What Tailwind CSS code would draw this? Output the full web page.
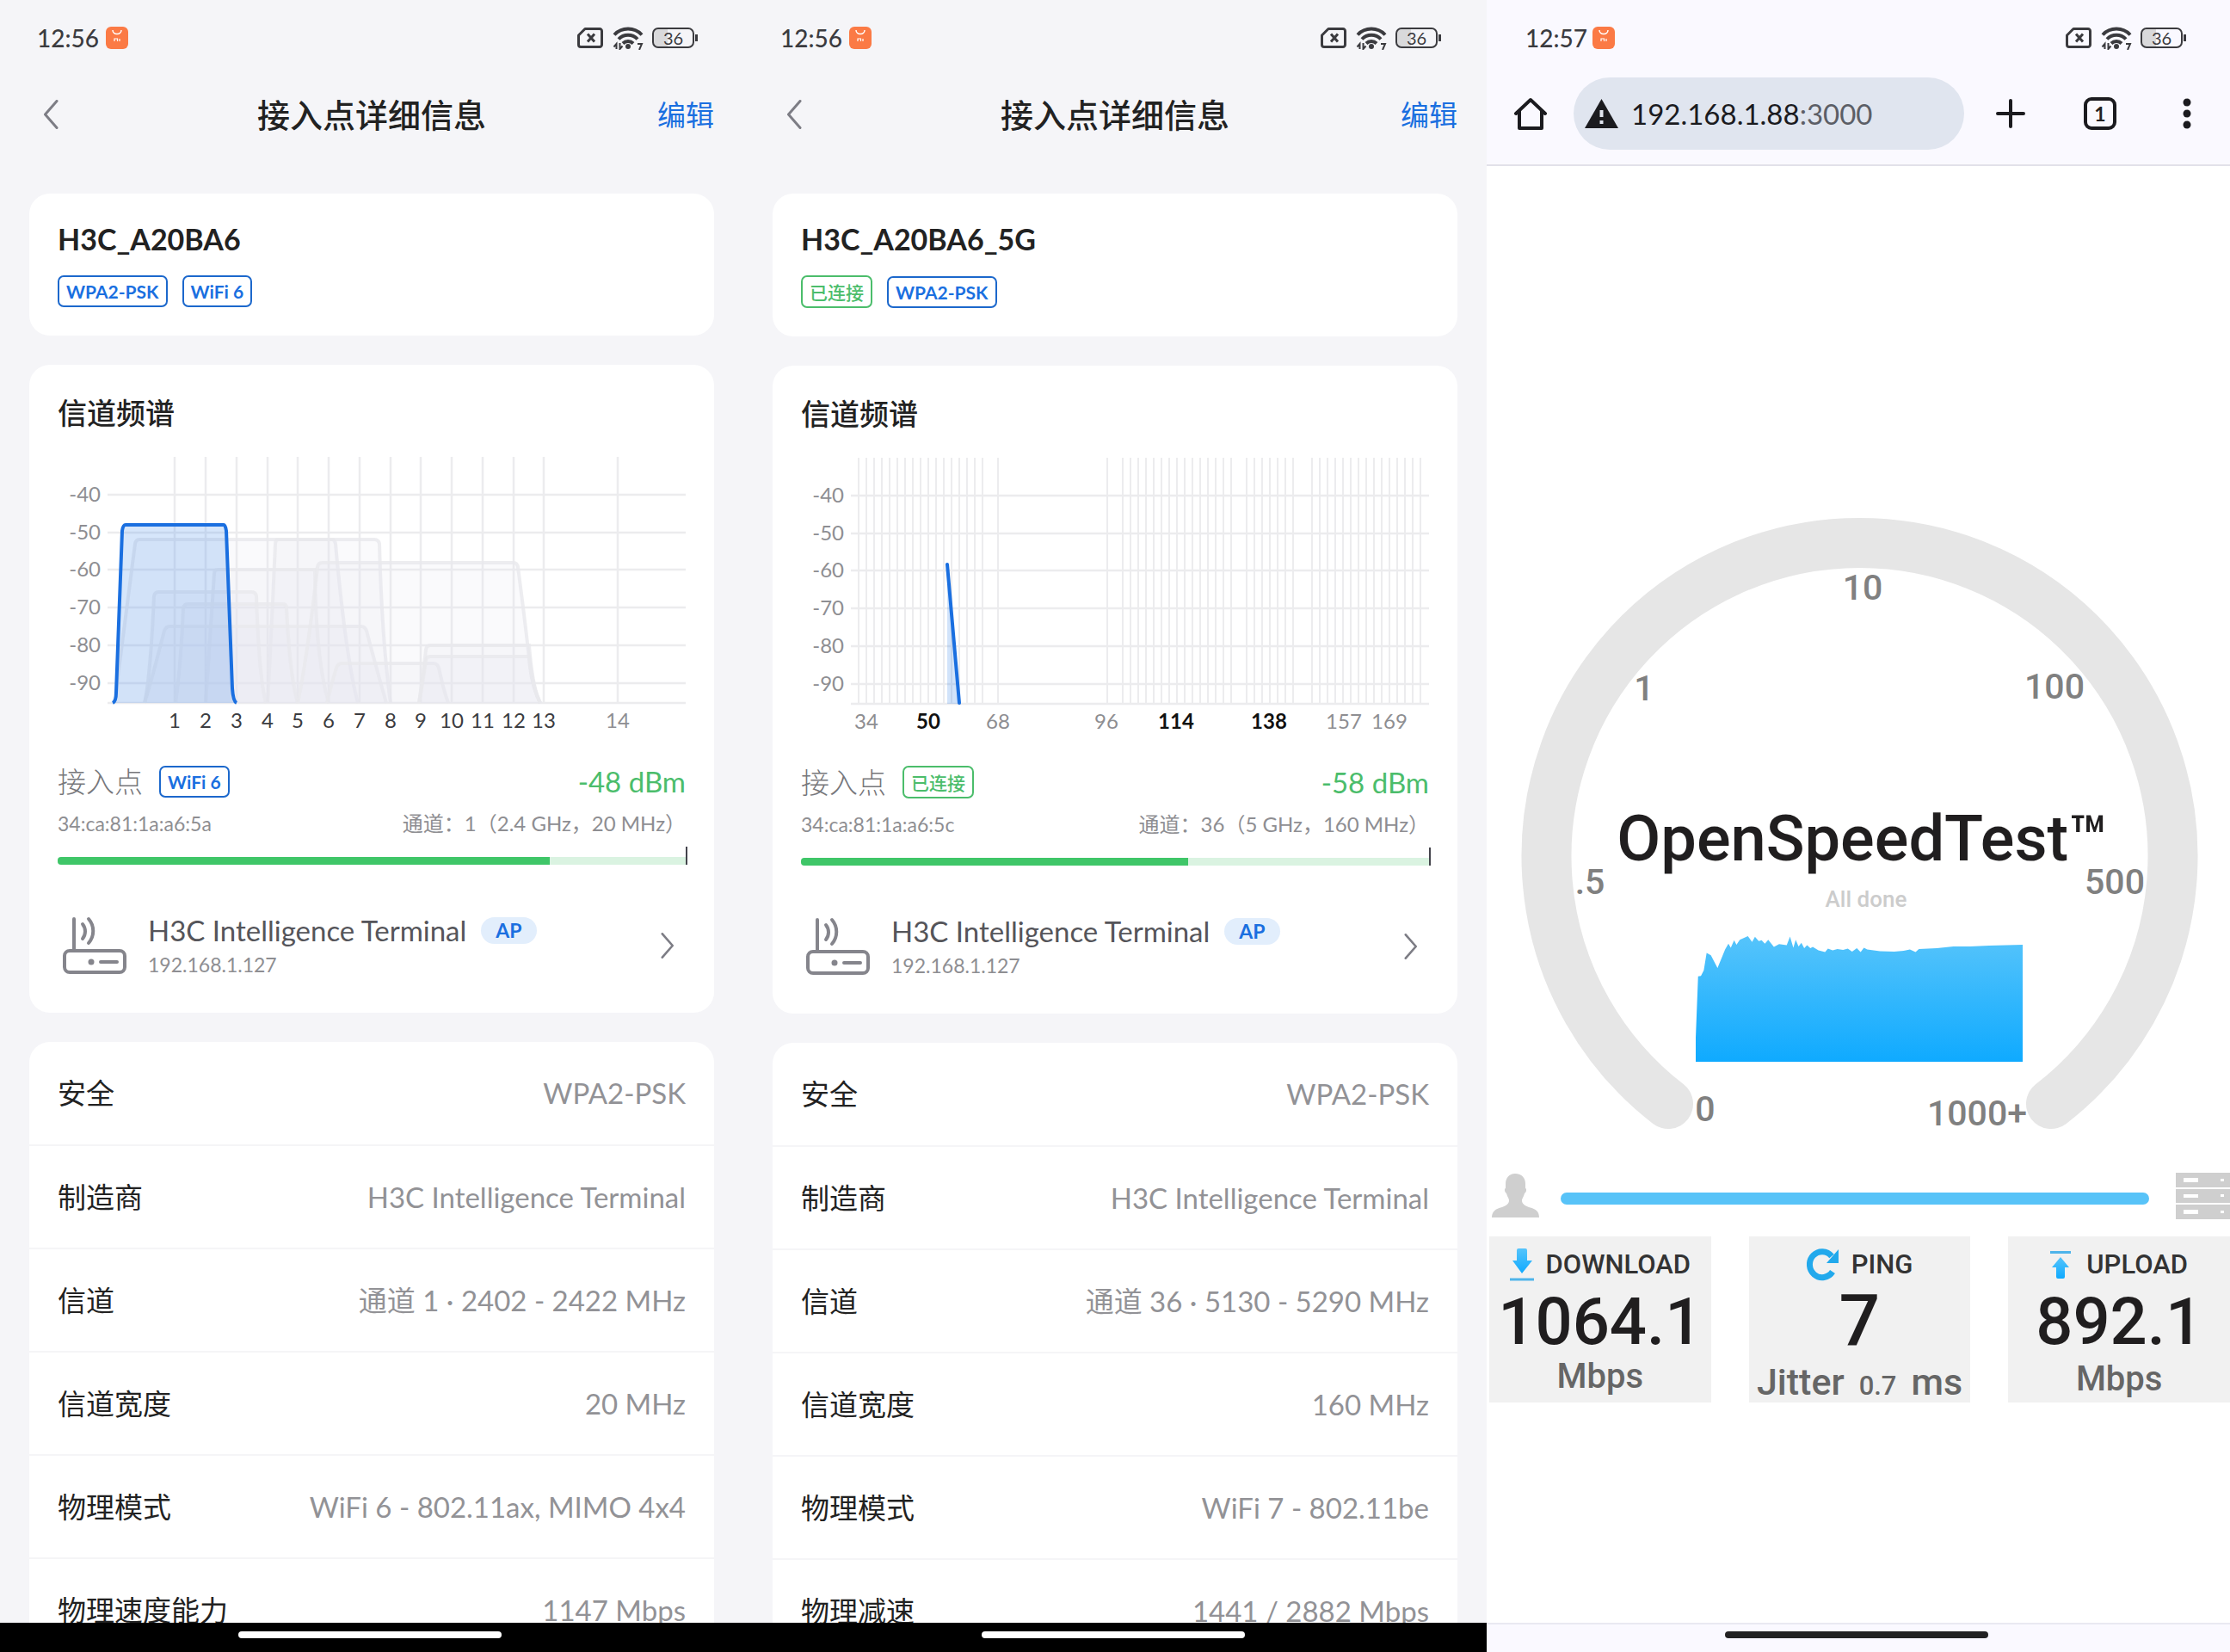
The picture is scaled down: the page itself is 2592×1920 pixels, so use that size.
<!DOCTYPE html>
<html lang="zh-CN">
<head>
  <meta charset="UTF-8">
  <meta name="viewport" content="width=device-width, initial-scale=1.0">
  <title>接入点详细信息</title>
  <script src="https://cdn.jsdelivr.net/npm/@tailwindcss/browser@4"></script>
</head>
<body class="grid h-screen grid-cols-3 overflow-hidden bg-white font-['Lato','Noto_Sans_CJK_SC',sans-serif] text-[#222]">

  <!-- Shared icons -->
  <svg class="hidden">
    <symbol id="store" viewBox="0 0 26 26">
      <rect width="26" height="26" rx="6" fill="#fb7a45"/>
      <path d="M8 4c0 6 10 6 10 0" fill="none" stroke="#fff" stroke-width="1.5"/>
      <path d="M10 17v-3h3.500v3M16 14v3" fill="none" stroke="#fff" stroke-width="1.2"/>
    </symbol>
    <symbol id="sim" viewBox="0 0 30 24">
      <path d="M9 1.500h17a2.500 2.500 0 0 1 2.500 2.500v16a2.500 2.500 0 0 1-2.500 2.500H4a2.500 2.500 0 0 1-2.500-2.500V9z" fill="none" stroke="#3b3b3f" stroke-width="3" stroke-linejoin="round"/>
      <path d="M12 7.500l8 9M20 7.500l-8 9" stroke="#3b3b3f" stroke-width="3"/>
    </symbol>
    <symbol id="wifi" viewBox="0 0 36 27">
      <g fill="none" stroke="#3b3b3f" stroke-width="4">
        <path d="M2 9.500a22 22 0 0 1 32 0"/>
        <path d="M7 14.500a15 15 0 0 1 22 0"/>
        <path d="M12 19.500a8.500 8.500 0 0 1 12 0"/>
      </g>
      <circle cx="18" cy="23" r="3" fill="#3b3b3f"/>
      <path d="M4.500 26v-6l-3 3.500M8.500 19v7l3-3.500M29 20h5l-3 7" fill="none" stroke="#3b3b3f" stroke-width="2"/>
    </symbol>
    <symbol id="router" viewBox="0 0 76 68">
      <g fill="none" stroke="#85858c" stroke-width="4" stroke-linecap="round">
        <rect x="3" y="40" width="70" height="25" rx="6"/>
        <path d="M14 3v36M24 9c4 5 4 12 0 17M31 3c7 8 7 20 0 28M45 53h19" />
      </g>
      <circle cx="34" cy="53" r="3.500" fill="#85858c"/>
    </symbol>
    <symbol id="chevron" viewBox="0 0 18 34">
      <path d="M16 1.500L2.500 17 16 32.500" fill="none" stroke="#7d7d85" stroke-width="3" stroke-linecap="round" stroke-linejoin="round"/>
    </symbol>
  </svg>

  <!-- 2.4G access point -->
  <section class="flex min-h-0 min-w-0 flex-col bg-[#f5f5f8]">
    <div class="flex h-[88px] shrink-0 items-center pr-[53px] pl-[43px] text-[#3b3b3f]">
      <span class="text-[28px] leading-none font-medium">12:56</span>
      <svg class="ml-2 h-[26px] w-[26px]"><use href="#store"/></svg>
      <svg class="ml-auto h-6 w-[30px]"><use href="#sim"/></svg>
      <svg class="ml-[11px] h-[27px] w-9"><use href="#wifi"/></svg>
      <span class="ml-[10px] flex h-6 w-[49px] items-center justify-center rounded-[7px] border-2 border-[#3b3b3f] bg-[linear-gradient(to_right,#d9d9db_35%,transparent_35%)] text-xl leading-none">36</span>
      <span class="ml-px h-2 w-[3px] bg-[#3b3b3f]"></span>
    </div>

    <header class="flex h-[90px] shrink-0 items-center justify-between px-[34px]">
      <button class="w-[66px] pl-4" aria-label="返回"><svg class="h-[34px] w-[18px]"><use href="#chevron"/></svg></button>
      <h1 class="text-[38px] leading-none font-medium">接入点详细信息</h1>
      <button class="text-[33px] leading-none text-[#1a6fe0]">编辑</button>
    </header>

    <main class="flex min-h-0 flex-1 flex-col gap-[34px] overflow-hidden px-[34px] pt-[47px]">
      <div class="shrink-0 rounded-3xl bg-white px-[33px] pt-8 pb-[33px]">
        <h2 class="text-[34px] leading-[42px] font-bold">H3C_A20BA6</h2>
        <div class="mt-[21px] flex items-end gap-[17px] text-[21px] leading-none font-bold">
          <span class="flex h-[37px] items-center rounded-[7px] border-2 border-[#1c68cc] px-2 text-[#1a6fe0]">WPA2-PSK</span>
          <span class="flex h-[37px] items-center rounded-[7px] border-2 border-[#1c68cc] px-2 text-[#1a6fe0]">WiFi 6</span>
        </div>
      </div>

      <div class="shrink-0 rounded-3xl bg-white px-[33px] pt-9 pb-11">
        <h2 class="text-[34px] leading-10 font-medium">信道频谱</h2>
        <svg class="mt-[25px] block w-full" viewBox="0 0 730 330">
          <g stroke="#ececee" stroke-width="2.500">
            <path d="M58 50H730M58 94H730M58 137H730M58 181H730M58 225H730M58 269H730M58 292H730"/>
            <path d="M136 6V292M172 6V292M208 6V292M244 6V292M279 6V292M315 6V292M351 6V292M387 6V292M422 6V292M458 6V292M494 6V292M530 6V292M565 6V292M651 6V292"/>
          </g>
          <g fill="#e8e7f2" fill-opacity=".2" stroke="#e9e9ec" stroke-opacity=".8" stroke-width="4">
            <path d="M66 292L90 107Q91 102 95 102H319Q322 102 323 107Q335 240 349 292"/>
            <path d="M244 292Q249 200 253 107Q253 102 257 102H368Q373 102 374 107Q377 220 387 292"/>
            <path d="M172 292Q178 200 182 142Q182 137 186 137H299Q300 240 315 292"/>
            <path d="M101 292Q108 260 112 168Q113 163 117 163H226Q230 163 231 168Q234 260 242 292"/>
            <path d="M137 292Q143 250 146 182Q147 177 151 177H262Q266 177 266 182Q270 260 279 292"/>
            <path d="M101 292Q108 270 124 208Q126 203 130 203H353Q357 203 359 208Q370 250 382 292"/>
            <path d="M279 292Q290 240 302 134Q303 129 307 129H530Q534 129 535 134Q545 210 549 250Q552 275 561 292"/>
            <path d="M313 292Q318 270 324 251Q326 246 330 246H437Q441 246 443 251Q448 275 454 292"/>
            <path d="M420 292Q425 260 428 230Q429 225 433 225H548Q552 275 561 292"/>
            <path d="M420 292Q425 265 428 242Q429 238 433 238H548Q552 275 561 292"/>
          </g>
          <path d="M64 292Q68 290 68 280L75 92Q76 85 79 85H193Q195 85 196 92L203 275Q204 290 208 292" fill="#1a73e8" fill-opacity=".18"/>
          <path d="M64 292Q68 290 68 280L75 92Q76 85 79 85H193Q195 85 196 92L203 275Q204 290 208 292" fill="none" stroke="#1a6fe0" stroke-width="4"/>
          <g class="text-[24px]" fill="#8e8e92" text-anchor="end">
            <text x="50" y="58">-40</text><text x="50" y="102">-50</text><text x="50" y="145">-60</text>
            <text x="50" y="189">-70</text><text x="50" y="233">-80</text><text x="50" y="277">-90</text>
          </g>
          <g class="text-[24px]" fill="#3c3c40" text-anchor="middle">
            <text x="136" y="321">1</text><text x="172" y="321">2</text><text x="208" y="321">3</text>
            <text x="244" y="321">4</text><text x="279" y="321">5</text><text x="315" y="321">6</text>
            <text x="351" y="321">7</text><text x="387" y="321">8</text><text x="422" y="321">9</text>
            <text x="458" y="321">10</text><text x="494" y="321">11</text><text x="530" y="321">12</text>
            <text x="565" y="321">13</text><text x="651" y="321" fill="#8e8e92">14</text>
          </g>
        </svg>

        <div class="mt-8 flex h-[42px] items-center">
          <span class="text-[33px] leading-none font-light text-[#77777b]">接入点</span>
          <span class="ml-[19px] flex h-[37px] items-center rounded-[7px] border-2 border-[#1c68cc] px-2 text-[21px] leading-none font-bold text-[#1a6fe0]">WiFi 6</span>
          <span class="ml-auto text-[33px] leading-none text-[#4bbd6b]">-48 dBm</span>
        </div>
        <div class="mt-3 flex justify-between text-[24px] leading-8 text-[#8e8e92]">
          <span class="text-[23px]">34:ca:81:1a:a6:5a</span>
          <span>通道：1（2.4 GHz，20 MHz）</span>
        </div>
        <div class="mt-[11px] flex h-[21px] items-end">
          <div class="h-[9px] flex-1 overflow-hidden rounded-l bg-[#daf3e1]">
            <div class="h-full bg-[#3fc668]" style="width: 78.3%"></div>
          </div>
          <div class="-mr-[2px] h-full w-[2px] bg-[#44444c]"></div>
        </div>
        <a href="#" class="mt-[60px] flex h-[68px] items-center pl-[5px]">
          <svg class="h-[68px] w-[76px]"><use href="#router"/></svg>
          <div class="ml-6 pt-1">
            <div class="flex items-center">
              <span class="text-[33px] leading-10 text-[#55555a]">H3C Intelligence Terminal</span>
              <span class="ml-[17px] flex h-[31px] items-center rounded-full bg-[#e2eefc] px-[17px] text-[23px] leading-none font-bold text-[#1a6fe0]">AP</span>
            </div>
            <div class="text-[23px] leading-10 text-[#8e8e92]">192.168.1.127</div>
          </div>
          <svg class="mr-[13px] ml-auto h-[30px] w-4 rotate-180"><use href="#chevron"/></svg>
        </a>
      </div>

      <div class="shrink-0 rounded-3xl bg-white">
        <table class="w-full text-[33px] leading-none">
          <tbody class="divide-y-2 divide-[#f5f5f7]">
            <tr class="h-[120px]"><th class="pl-[33px] text-left font-normal">安全</th><td class="pr-[33px] text-right text-[#929296]">WPA2-PSK</td></tr>
            <tr class="h-[120px]"><th class="pl-[33px] text-left font-normal">制造商</th><td class="pr-[33px] text-right text-[#929296]">H3C Intelligence Terminal</td></tr>
            <tr class="h-[120px]"><th class="pl-[33px] text-left font-normal">信道</th><td class="pr-[33px] text-right text-[#929296]">通道 1 · 2402 - 2422 MHz</td></tr>
            <tr class="h-[120px]"><th class="pl-[33px] text-left font-normal">信道宽度</th><td class="pr-[33px] text-right text-[#929296]">20 MHz</td></tr>
            <tr class="h-[120px]"><th class="pl-[33px] text-left font-normal">物理模式</th><td class="pr-[33px] text-right text-[#929296]">WiFi 6 - 802.11ax, MIMO 4x4</td></tr>
            <tr class="h-[120px]"><th class="pl-[33px] text-left font-normal">物理速度能力</th><td class="pr-[33px] text-right text-[#929296]">1147 Mbps</td></tr>
          </tbody>
        </table>
      </div>
    </main>

    <footer class="flex h-[34px] shrink-0 justify-center bg-black pt-[10px] pr-1">
      <div class="h-2 w-[306px] rounded-full bg-white"></div>
    </footer>
  </section>

  <!-- 5G access point -->
  <section class="flex min-h-0 min-w-0 flex-col bg-[#f5f5f8]">
    <div class="flex h-[88px] shrink-0 items-center pr-[53px] pl-[43px] text-[#3b3b3f]">
      <span class="text-[28px] leading-none font-medium">12:56</span>
      <svg class="ml-2 h-[26px] w-[26px]"><use href="#store"/></svg>
      <svg class="ml-auto h-6 w-[30px]"><use href="#sim"/></svg>
      <svg class="ml-[11px] h-[27px] w-9"><use href="#wifi"/></svg>
      <span class="ml-[10px] flex h-6 w-[49px] items-center justify-center rounded-[7px] border-2 border-[#3b3b3f] bg-[linear-gradient(to_right,#d9d9db_35%,transparent_35%)] text-xl leading-none">36</span>
      <span class="ml-px h-2 w-[3px] bg-[#3b3b3f]"></span>
    </div>

    <header class="flex h-[90px] shrink-0 items-center justify-between px-[34px]">
      <button class="w-[66px] pl-4" aria-label="返回"><svg class="h-[34px] w-[18px]"><use href="#chevron"/></svg></button>
      <h1 class="text-[38px] leading-none font-medium">接入点详细信息</h1>
      <button class="text-[33px] leading-none text-[#1a6fe0]">编辑</button>
    </header>

    <main class="flex min-h-0 flex-1 flex-col gap-[34px] overflow-hidden px-[34px] pt-[47px]">
      <div class="shrink-0 rounded-3xl bg-white px-[33px] pt-8 pb-[33px]">
        <h2 class="text-[34px] leading-[42px] font-bold">H3C_A20BA6_5G</h2>
        <div class="mt-[21px] flex items-end gap-[17px] text-[21px] leading-none font-bold">
          <span class="flex h-[38px] items-center rounded-[7px] border-2 border-[#4bbd6b] px-2 font-medium text-[#4bbd6b]">已连接</span>
          <span class="flex h-[37px] items-center rounded-[7px] border-2 border-[#1c68cc] px-2 text-[#1a6fe0]">WPA2-PSK</span>
        </div>
      </div>

      <div class="shrink-0 rounded-3xl bg-white px-[33px] pt-9 pb-11">
        <h2 class="text-[34px] leading-10 font-medium">信道频谱</h2>
        <svg class="mt-[25px] block w-full" viewBox="0 0 730 330">
          <path d="M58 50H730M58 94H730M58 137H730M58 181H730M58 225H730M58 269H730M58 292H730" stroke="#ececee" stroke-width="2.500"/>
          <!-- channel lines, one every 9 units -->
          <g stroke="#ececee" stroke-width="286" stroke-dasharray="2 7">
            <path d="M66 149H213"/>
            <path d="M228 149H230"/>
            <path d="M355 149H357"/>
            <path d="M373 149H502"/>
            <path d="M517 149H574"/>
            <path d="M593 149H722"/>
          </g>
          <path d="M170 129L184 292H170z" fill="#1a73e8" fill-opacity=".2"/>
          <path d="M170 130L184 291" stroke="#1a6fe0" stroke-width="4" stroke-linecap="round"/>
          <g class="text-[24px]" fill="#8e8e92" text-anchor="end">
            <text x="50" y="58">-40</text><text x="50" y="102">-50</text><text x="50" y="145">-60</text>
            <text x="50" y="189">-70</text><text x="50" y="233">-80</text><text x="50" y="277">-90</text>
          </g>
          <g class="text-[24px]" fill="#8e8e92" text-anchor="middle">
            <text x="76" y="321">34</text>
            <text x="148" y="321" class="font-bold" fill="#111">50</text>
            <text x="229" y="321">68</text>
            <text x="355" y="321">96</text>
            <text x="436" y="321" class="font-bold" fill="#111">114</text>
            <text x="544" y="321" class="font-bold" fill="#111">138</text>
            <text x="631" y="321">157</text>
            <text x="684" y="321">169</text>
          </g>
        </svg>

        <div class="mt-8 flex h-[42px] items-center">
          <span class="text-[33px] leading-none font-light text-[#77777b]">接入点</span>
          <span class="ml-[19px] flex h-[38px] items-center rounded-[7px] border-2 border-[#4bbd6b] px-2 text-[21px] leading-none font-medium text-[#4bbd6b]">已连接</span>
          <span class="ml-auto text-[33px] leading-none text-[#4bbd6b]">-58 dBm</span>
        </div>
        <div class="mt-3 flex justify-between text-[24px] leading-8 text-[#8e8e92]">
          <span class="text-[23px]">34:ca:81:1a:a6:5c</span>
          <span>通道：36（5 GHz，160 MHz）</span>
        </div>
        <div class="mt-[11px] flex h-[21px] items-end">
          <div class="h-[9px] flex-1 overflow-hidden rounded-l bg-[#daf3e1]">
            <div class="h-full bg-[#3fc668]" style="width: 61.6%"></div>
          </div>
          <div class="-mr-[2px] h-full w-[2px] bg-[#44444c]"></div>
        </div>
        <a href="#" class="mt-[60px] flex h-[68px] items-center pl-[5px]">
          <svg class="h-[68px] w-[76px]"><use href="#router"/></svg>
          <div class="ml-6 pt-1">
            <div class="flex items-center">
              <span class="text-[33px] leading-10 text-[#55555a]">H3C Intelligence Terminal</span>
              <span class="ml-[17px] flex h-[31px] items-center rounded-full bg-[#e2eefc] px-[17px] text-[23px] leading-none font-bold text-[#1a6fe0]">AP</span>
            </div>
            <div class="text-[23px] leading-10 text-[#8e8e92]">192.168.1.127</div>
          </div>
          <svg class="mr-[13px] ml-auto h-[30px] w-4 rotate-180"><use href="#chevron"/></svg>
        </a>
      </div>

      <div class="shrink-0 rounded-3xl bg-white">
        <table class="w-full text-[33px] leading-none">
          <tbody class="divide-y-2 divide-[#f5f5f7]">
            <tr class="h-[120px]"><th class="pl-[33px] text-left font-normal">安全</th><td class="pr-[33px] text-right text-[#929296]">WPA2-PSK</td></tr>
            <tr class="h-[120px]"><th class="pl-[33px] text-left font-normal">制造商</th><td class="pr-[33px] text-right text-[#929296]">H3C Intelligence Terminal</td></tr>
            <tr class="h-[120px]"><th class="pl-[33px] text-left font-normal">信道</th><td class="pr-[33px] text-right text-[#929296]">通道 36 · 5130 - 5290 MHz</td></tr>
            <tr class="h-[120px]"><th class="pl-[33px] text-left font-normal">信道宽度</th><td class="pr-[33px] text-right text-[#929296]">160 MHz</td></tr>
            <tr class="h-[120px]"><th class="pl-[33px] text-left font-normal">物理模式</th><td class="pr-[33px] text-right text-[#929296]">WiFi 7 - 802.11be</td></tr>
            <tr class="h-[120px]"><th class="pl-[33px] text-left font-normal">物理减速</th><td class="pr-[33px] text-right text-[#929296]">1441 / 2882 Mbps</td></tr>
          </tbody>
        </table>
      </div>
    </main>

    <footer class="flex h-[34px] shrink-0 justify-center bg-black pt-[10px] pr-1">
      <div class="h-2 w-[306px] rounded-full bg-white"></div>
    </footer>
  </section>

  <!-- Browser with the speed test -->
  <section class="flex min-h-0 min-w-0 flex-col bg-white">
    <div class="flex h-[88px] shrink-0 items-center bg-[#faf9ff] pr-[51px] pl-[45px] text-[#3b3b3f]">
      <span class="text-[28px] leading-none font-medium">12:57</span>
      <svg class="ml-[6px] h-[26px] w-[26px]"><use href="#store"/></svg>
      <svg class="ml-auto h-6 w-[30px]"><use href="#sim"/></svg>
      <svg class="ml-[11px] h-[27px] w-9"><use href="#wifi"/></svg>
      <span class="ml-[10px] flex h-6 w-[49px] items-center justify-center rounded-[7px] border-2 border-[#3b3b3f] bg-[linear-gradient(to_right,#d9d9db_35%,transparent_35%)] text-xl leading-none">36</span>
      <span class="ml-px h-2 w-[3px] bg-[#3b3b3f]"></span>
    </div>

    <header class="flex h-[105px] shrink-0 items-center border-b-2 border-[#e2e1e9] bg-[#faf9ff] pr-[45px] pb-[15px] pl-[31px]">
      <button aria-label="主页">
        <svg class="h-10 w-10" viewBox="0 0 40 40" fill="none" stroke="#1b1b1f" stroke-width="4" stroke-linejoin="round" stroke-linecap="round"><path d="M3 20L20 4l17 16M7 17v20h26V17"/></svg>
      </button>
      <div class="ml-[30px] flex h-[84px] flex-1 items-center rounded-full bg-[#e0e5ef] pl-[13px]">
        <button aria-label="网站信息">
          <svg class="h-[34px] w-[39px]" viewBox="0 0 39 34"><path d="M19.500 0L39 34H0z" fill="#1b1b1f"/><path d="M19.500 13v8M19.500 25v4" stroke="#e0e5ef" stroke-width="4"/></svg>
        </button>
        <button class="ml-[15px] text-[33px] leading-none text-[#1b1b1f]">192.168.1.88<span class="text-[#5c5e66]">:3000</span></button>
      </div>
      <button class="ml-[37px]" aria-label="新标签页">
        <svg class="h-[34px] w-[34px]" viewBox="0 0 34 34" stroke="#1b1b1f" stroke-width="4" stroke-linecap="round"><path d="M17 2v30M2 17h30"/></svg>
      </button>
      <button class="ml-[68px] flex h-[38px] w-[38px] items-center justify-center rounded-[9px] border-4 border-[#1b1b1f] text-[23px] leading-none font-bold">1</button>
      <button class="ml-[77px]" aria-label="菜单">
        <svg class="h-9 w-[10px]" viewBox="0 0 10 36" fill="#1b1b1f"><circle cx="5" cy="5" r="4.500"/><circle cx="5" cy="18" r="4.500"/><circle cx="5" cy="31" r="4.500"/></svg>
      </button>
    </header>

    <main class="min-h-0 flex-1 overflow-hidden pt-[407px] font-['Roboto',sans-serif]">
      <svg class="block w-full" viewBox="0 20 864 720">
        <defs>
          <linearGradient id="area" x1="0" y1="0" x2="0" y2="1">
            <stop offset="0" stop-color="#56c4fb"/>
            <stop offset="1" stop-color="#0faaff"/>
          </linearGradient>
        </defs>
        <path d="M211 703A364 364 0 1 1 656 703" fill="none" stroke="#e6e6e6" stroke-width="58" stroke-linecap="round"/>
        <g class="text-[41px] font-medium" fill="#808080" text-anchor="middle">
          <text x="437" y="117">10</text>
          <text x="183" y="234">1</text>
          <text x="660" y="232">100</text>
          <text x="120" y="459">.5</text>
          <text x="730" y="459">500</text>
          <text x="254" y="723">0</text>
          <text x="570" y="728">1000+</text>
        </g>
        <text x="437" y="420" class="text-[74px] font-medium" fill="#201e1f" text-anchor="middle">OpenSpeedTest™</text>
        <text x="441" y="474" class="text-[26px] font-medium" fill="#ccc" text-anchor="middle">All done</text>
        <svg x="243" y="504" width="380" height="150" viewBox="441 1040 690 308" preserveAspectRatio="none">
          <path fill="url(#area)" d="M441 1348V1290L446 1144 452 1143 458 1130 464 1088 473 1094 487 1124 503 1080 510 1066 515 1076 522 1058 527 1069 534 1057 551 1048 560 1062 566 1050 574 1060 580 1058 587 1066 594 1057 606 1074 617 1067 633 1070 640 1049 647 1076 652 1057 658 1073 664 1064 670 1077 676 1070 683 1077 688 1074 700 1082 714 1086 720 1078 730 1082 740 1079 752 1081 762 1078 771 1085 781 1077 789 1086 796 1076 803 1080 830 1084 860 1085 880 1083 893 1080 905 1086 912 1079 950 1077 985 1073 1020 1073 1060 1071 1131 1069V1348z"/>
        </svg>
      </svg>

      <div class="mt-[42px] flex h-[55px] items-center">
        <svg class="ml-[6px] h-[51px] w-[55px]" viewBox="0 0 55 51" fill="#cfcfcf"><path d="M27 0c8 0 12 5 12 12v5c2 1 1 5-1 6-1 4-3 6-3 8 0 4 3 6 8 8 8 2 12 5 12 12H0c0-7 4-10 12-12 5-2 8-4 8-8 0-2-2-4-3-8-2-1-3-5-1-6v-5C16 5 20 0 27 0z"/></svg>
        <div class="mt-[6px] ml-[25px] h-[14px] flex-1 rounded-full bg-[#58c3f8]"></div>
        <svg class="ml-[31px] h-[54px] w-[63px]" viewBox="0 0 63 54">
          <path d="M0 0h63v17H0zM0 19h63v16H0zM0 37h63v17H0z" fill="#cfcfcf"/>
          <path d="M9 6h17v5H9zM52 7h4v3h-4zM9 25h17v4H9zM52 25h4v3h-4zM9 43h17v5H9zM52 44h4v3h-4z" fill="#fff"/>
        </svg>
      </div>

      <div class="mt-5 grid grid-cols-3 gap-[44px] pl-[3px] text-center text-[#201e1f]">
        <div class="h-[193px] bg-[#f1f1f1] pt-3">
          <div class="flex h-[42px] items-center justify-center gap-[14px] text-[31px] font-medium text-[#333]">
            <svg class="h-[38px] w-7" viewBox="0 0 28 38"><path d="M8 2q0-2 2-2h8q2 0 2 2v12h6L14 29 3 14h5z" fill="url(#area)"/><path d="M0 36h28" stroke="#4eb4ea" stroke-width="3"/></svg>
            DOWNLOAD
          </div>
          <div class="text-[76px] leading-[90px] font-medium">1064.1</div>
          <div class="text-[40px] leading-[38px] font-medium text-[#666]">Mbps</div>
        </div>
        <div class="h-[193px] bg-[#f1f1f1] pt-3">
          <div class="flex h-[42px] items-center justify-center gap-[14px] text-[31px] font-medium text-[#333]">
            <svg class="h-[38px] w-[38px]" viewBox="0 0 38 38"><path d="M30 27A14.500 15 0 1 1 29 9" fill="none" stroke="#22a9ec" stroke-width="7"/><path d="M37 1v16H23z" fill="#22a9ec"/></svg>
            PING
          </div>
          <div class="text-[84px] leading-[90px] font-medium">7</div>
          <div class="flex items-baseline justify-center text-[43px] leading-[50px] font-medium whitespace-nowrap text-[#666]">Jitter<span class="mx-[17px] text-[31px]">0.7</span>ms</div>
        </div>
        <div class="h-[193px] bg-[#f1f1f1] pt-3">
          <div class="flex h-[42px] items-center justify-center gap-[18px] text-[31px] font-medium text-[#333]">
            <svg class="h-8 w-6" viewBox="0 0 24 32"><path d="M0 1.500h24" stroke="#4eb4ea" stroke-width="3"/><path d="M7 30q0 2 2 2h6q2 0 2-2V19h5L12 7 2 19h5z" fill="url(#area)"/></svg>
            UPLOAD
          </div>
          <div class="text-[76px] leading-[90px] font-medium">892.1</div>
          <div class="text-[40px] leading-[44px] font-medium text-[#666]">Mbps</div>
        </div>
      </div>
    </main>

    <footer class="flex h-[34px] shrink-0 justify-center border-t-2 border-[#e9e9f2] bg-[#faf9ff] pt-2 pr-1">
      <div class="h-2 w-[306px] rounded-full bg-[#222]"></div>
    </footer>
  </section>

</body>
</html>
